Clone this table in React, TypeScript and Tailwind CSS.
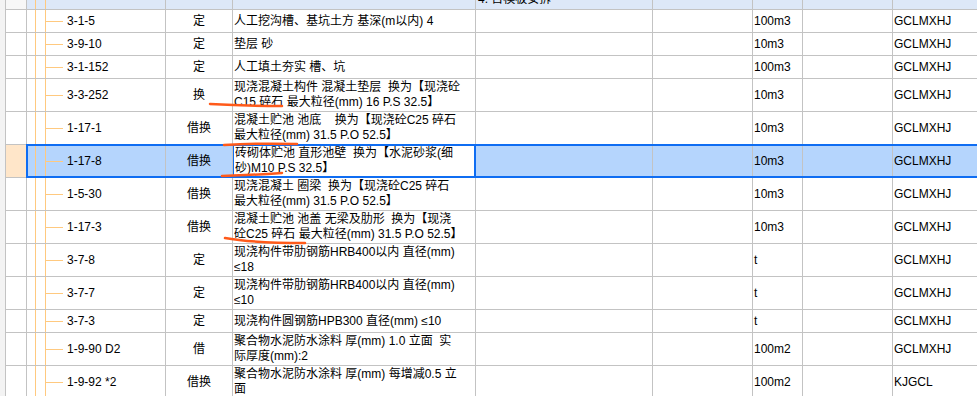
type Item = {
  code: string;
  type: string;
  desc: string[];
  unit: string;
  tag: string;
  selected?: boolean;
  beforeSelected?: boolean;
};

const rows: Item[] = [
  { code: "3-1-5", type: "定", desc: ["人工挖沟槽、基坑土方 基深(m以内) 4"], unit: "100m3", tag: "GCLMXHJ" },
  { code: "3-9-10", type: "定", desc: ["垫层 砂"], unit: "10m3", tag: "GCLMXHJ" },
  { code: "3-1-152", type: "定", desc: ["人工填土夯实 槽、坑"], unit: "100m3", tag: "GCLMXHJ" },
  {
    code: "3-3-252",
    type: "换",
    desc: ["现浇混凝土构件 混凝土垫层  换为【现浇砼", "C15 碎石 最大粒径(mm) 16 P.S 32.5】"],
    unit: "10m3",
    tag: "GCLMXHJ",
  },
  {
    code: "1-17-1",
    type: "借换",
    desc: ["混凝土贮池 池底    换为【现浇砼C25 碎石", "最大粒径(mm) 31.5 P.O 52.5】"],
    unit: "10m3",
    tag: "GCLMXHJ",
    beforeSelected: true,
  },
  {
    code: "1-17-8",
    type: "借换",
    desc: ["砖砌体贮池 直形池壁  换为【水泥砂浆(细", "砂)M10 P.S 32.5】"],
    unit: "10m3",
    tag: "GCLMXHJ",
    selected: true,
  },
  {
    code: "1-5-30",
    type: "借换",
    desc: ["现浇混凝土 圈梁  换为【现浇砼C25 碎石", "最大粒径(mm) 31.5 P.O 52.5】"],
    unit: "10m3",
    tag: "GCLMXHJ",
  },
  {
    code: "1-17-3",
    type: "借换",
    desc: ["混凝土贮池 池盖 无梁及肋形  换为【现浇", "砼C25 碎石 最大粒径(mm) 31.5 P.O 52.5】"],
    unit: "10m3",
    tag: "GCLMXHJ",
  },
  { code: "3-7-8", type: "定", desc: ["现浇构件带肋钢筋HRB400以内 直径(mm)", "≤18"], unit: "t", tag: "GCLMXHJ" },
  { code: "3-7-7", type: "定", desc: ["现浇构件带肋钢筋HRB400以内 直径(mm)", "≤10"], unit: "t", tag: "GCLMXHJ" },
  { code: "3-7-3", type: "定", desc: ["现浇构件圆钢筋HPB300 直径(mm) ≤10"], unit: "t", tag: "GCLMXHJ" },
  {
    code: "1-9-90 D2",
    type: "借",
    desc: ["聚合物水泥防水涂料 厚(mm) 1.0 立面  实", "际厚度(mm):2"],
    unit: "100m2",
    tag: "GCLMXHJ",
  },
  {
    code: "1-9-92 *2",
    type: "借换",
    desc: ["聚合物水泥防水涂料 厚(mm) 每增减0.5 立", "面"],
    unit: "100m2",
    tag: "KJGCL",
  },
];

const TreeCode = ({ code, lead }: { code?: string; lead: "w-[8px]" | "w-[7px]" }) => (
  <div className="flex items-stretch h-full">
    <div className={`${lead} shrink-0`} />
    <div className="w-px shrink-0 bg-[#ffc97f]" />
    <div className="w-[9px] shrink-0" />
    <div className="w-px shrink-0 bg-[#ffc97f]" />
    {code && (
      <div className="flex items-center">
        <div className="w-[17px] h-px bg-[#ffc97f]" />
        <span className="ml-[4px] whitespace-pre">{code}</span>
      </div>
    )}
  </div>
);

const Desc = ({ lines }: { lines: string[] }) => (
  <div className="flex flex-col justify-center h-full pl-px">
    {lines.map((l, i) => (
      <div key={i} className="whitespace-pre leading-[15px] h-[15px] overflow-hidden">
        {l}
      </div>
    ))}
  </div>
);

// the cells right of the code column, shared by normal and selected rows
const RestCells = ({ r, bottom }: { r: Item; bottom: string }) => (
  <>
    <div className={`w-[67px] shrink-0 border-r ${bottom} border-[#c3c3c3] flex items-center justify-center`}>
      {r.type}
    </div>
    {r.selected ? (
      <div className="w-[243px] shrink-0 bg-white border-l border-r-2 border-[#0f6df2]">
        <Desc lines={r.desc} />
      </div>
    ) : (
      <div className={`w-[243px] shrink-0 border-r ${bottom} border-[#c3c3c3]`}>
        <Desc lines={r.desc} />
      </div>
    )}
    <div className={`w-[177px] shrink-0 border-r ${bottom} border-[#c3c3c3]`} />
    <div className={`w-[100px] shrink-0 border-r ${bottom} border-[#c3c3c3]`} />
    <div className={`w-[50px] shrink-0 border-r ${bottom} border-[#c3c3c3] flex items-center pl-px`}>
      {r.unit}
    </div>
    <div className={`w-[90px] shrink-0 border-r ${bottom} border-[#c3c3c3]`} />
    <div className={`flex-1 ${bottom} border-[#c3c3c3] flex items-center pl-px`}>{r.tag}</div>
  </>
);

const Row = ({ r }: { r: Item }) => {
  if (r.selected) {
    return (
      <div className="flex h-[34px]">
        <div className="w-[6px] shrink-0 bg-[#f3f3f3] border-r border-[#c3c3c3]" />
        <div className="w-[20px] shrink-0 bg-[#ffe6c9] border-t border-b border-[#c3c3c3]" />
        <div className="flex flex-1 bg-[#b5d5fd] border-t-2 border-b-2 border-l-2 border-[#0f6df2]">
          <div className="w-[138px] shrink-0 border-r border-[#c3c3c3]">
            <TreeCode code={r.code} lead="w-[7px]" />
          </div>
          <RestCells r={r} bottom="" />
        </div>
      </div>
    );
  }
  const h = r.beforeSelected ? "h-[32px]" : r.desc.length > 1 ? "h-[33px]" : "h-[23px]";
  const bottom = r.beforeSelected ? "" : "border-b";
  return (
    <div className={`flex ${h}`}>
      <div className="w-[6px] shrink-0 bg-[#f3f3f3] border-r border-[#c3c3c3]" />
      <div className={`w-[21px] shrink-0 border-r ${bottom} border-[#c3c3c3]`} />
      <div className={`w-[139px] shrink-0 border-r ${bottom} border-[#c3c3c3]`}>
        <TreeCode code={r.code} lead="w-[8px]" />
      </div>
      <RestCells r={r} bottom={bottom} />
    </div>
  );
};

export default function App() {
  return (
    <div className="relative w-[977px] h-[396px] overflow-hidden bg-white text-black text-[12px] leading-[15px] font-['Liberation_Sans','Noto_Sans_CJK_SC',sans-serif]">
      {/* group header, scrolled mostly out of view */}
      <div className="flex h-[10px] overflow-hidden">
        <div className="w-[6px] shrink-0 bg-[#f3f3f3] border-r border-[#c3c3c3]" />
        <div className="w-[21px] shrink-0 border-r border-b border-[#c3c3c3] bg-[#f7f7f7]" />
        <div className="flex flex-1 bg-[#dde8f8]">
          <div className="w-[139px] shrink-0 border-r border-b border-[#c3c3c3]">
            <TreeCode lead="w-[8px]" />
          </div>
          <div className="w-[67px] shrink-0 border-r border-b border-[#c3c3c3]" />
          <div className="w-[243px] shrink-0 border-r border-b border-[#c3c3c3]" />
          <div className="w-[177px] shrink-0 border-r border-b border-[#c3c3c3] overflow-hidden">
            <div className="mt-[-8px] pl-[2px] whitespace-pre">4. 否模板安拆</div>
          </div>
          <div className="w-[100px] shrink-0 border-r border-b border-[#c3c3c3]" />
          <div className="w-[50px] shrink-0 border-r border-b border-[#c3c3c3]" />
          <div className="w-[90px] shrink-0 border-r border-b border-[#c3c3c3]" />
          <div className="flex-1 border-b border-[#c3c3c3]" />
        </div>
      </div>

      {rows.map((r) => (
        <Row key={r.code} r={r} />
      ))}

      {/* hand-drawn marker strokes over the grid */}
      <svg
        className="absolute left-0 top-0 pointer-events-none"
        width="977"
        height="396"
        viewBox="0 0 977 396"
        fill="none"
      >
        <g stroke="#ff5a1a" strokeWidth="2.5" strokeLinecap="round">
          <path d="M210 104 Q 248 106 282 106" />
          <path d="M224 145 Q 260 143 297 144" />
          <path d="M222 176 Q 252 175 282 173" />
          <path d="M225 238 Q 252 243 305 243" />
        </g>
      </svg>
    </div>
  );
}
